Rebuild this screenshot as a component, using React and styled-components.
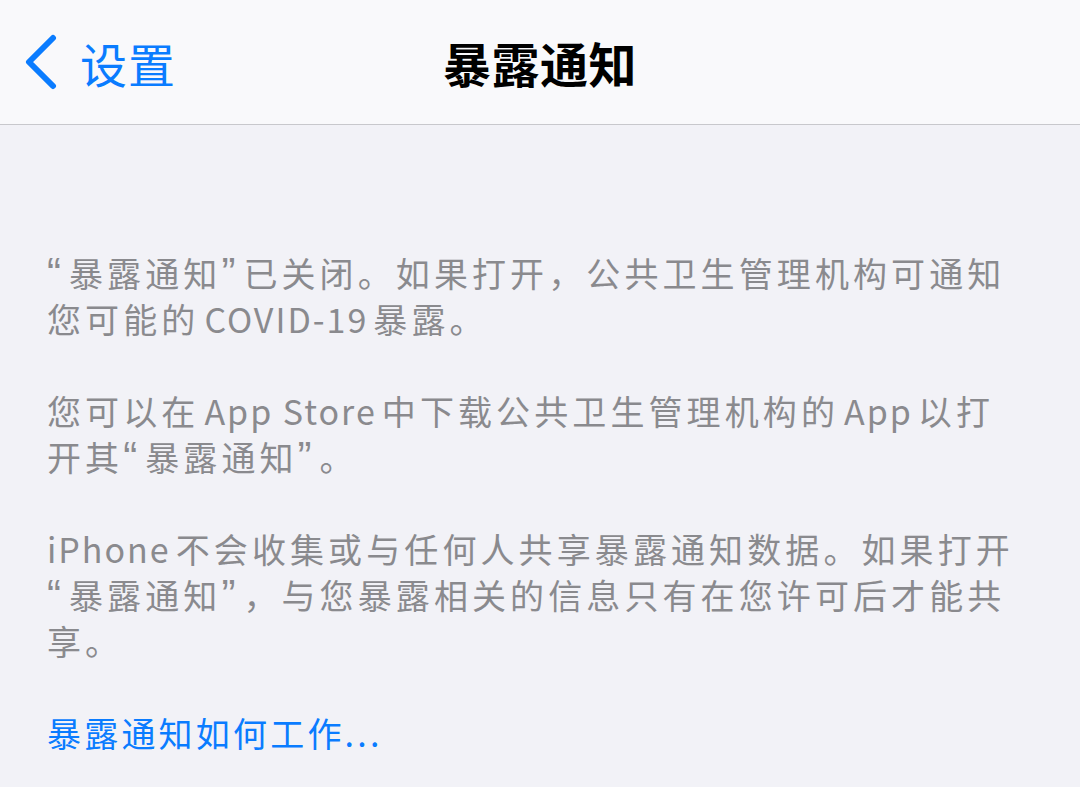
import React from "react";
import styled, { createGlobalStyle } from "styled-components";

const Global = createGlobalStyle`
  html, body { margin: 0; padding: 0; background: #f2f2f7; }
  body { font-family: "Noto Sans CJK SC", "Noto Sans", sans-serif; }
`;

const Page = styled.div`
  width: 1080px;
  height: 787px;
  background: #f2f2f7;
  overflow: hidden;
  display: flex;
  flex-direction: column;
`;

const NavBar = styled.div`
  height: 125px;
  box-sizing: border-box;
  background: #f9f9fb;
  border-bottom: 1.5px solid #c8c8cc;
  display: grid;
  grid-template-columns: 1fr auto 1fr;
  align-items: center;
`;

const Back = styled.div`
  display: flex;
  align-items: center;
  gap: 22px;
  padding-left: 24px;
  color: #0a7cff;
  font-size: 47px;
  line-height: 1;
  letter-spacing: 1px;
`;

const Title = styled.div`
  font-size: 48px;
  font-weight: 700;
  color: #000;
  letter-spacing: 0.5px;
  line-height: 1;
`;

const Content = styled.div`
  padding: 125px 40px 0 47px;
`;

const Para = styled.p`
  margin: 0 0 46px;
  font-size: 34px;
  line-height: 46px;
  color: #8a8a8e;
  letter-spacing: 4.1px;
  white-space: nowrap;
`;

const Q = styled.span`
  font-family: "Liberation Sans", "Noto Sans", sans-serif;
  font-size: 42px;
  line-height: 0;
  letter-spacing: 8px;
`;

const Latin = styled.span`
  letter-spacing: 2px;
  margin: 0 ${(p) => (p.$first ? "5px 0 0" : "5px")};
`;

const Link = styled.p`
  margin: 0;
  font-size: 34px;
  line-height: 46px;
  color: #0a7cff;
  letter-spacing: 3.2px;
`;

const Chevron = () => (
  <svg width="34" height="56" viewBox="0 0 34 56">
    <polyline
      points="29,4 5,28 29,52"
      fill="none"
      stroke="#0a7cff"
      strokeWidth="6"
      strokeLinecap="round"
      strokeLinejoin="round"
    />
  </svg>
);

export default function App() {
  return (
    <Page>
      <Global />
      <NavBar>
        <Back>
          <Chevron />
          <span>设置</span>
        </Back>
        <Title>暴露通知</Title>
        <div />
      </NavBar>
      <Content>
        <Para>
          <Q>“</Q>暴露通知<Q>”</Q>已关闭。如果打开，公共卫生管理机构可通知
          <br />
          您可能的<Latin>COVID-19</Latin>暴露。
        </Para>
        <Para>
          您可以在<Latin>App Store</Latin>中下载公共卫生管理机构的<Latin>App</Latin>以打
          <br />
          开其<Q>“</Q>暴露通知<Q>”</Q>。
        </Para>
        <Para>
          <Latin $first>iPhone</Latin>不会收集或与任何人共享暴露通知数据。如果打开
          <br />
          <Q>“</Q>暴露通知<Q>”</Q>，与您暴露相关的信息只有在您许可后才能共
          <br />
          享。
        </Para>
        <Link>暴露通知如何工作...</Link>
      </Content>
    </Page>
  );
}
